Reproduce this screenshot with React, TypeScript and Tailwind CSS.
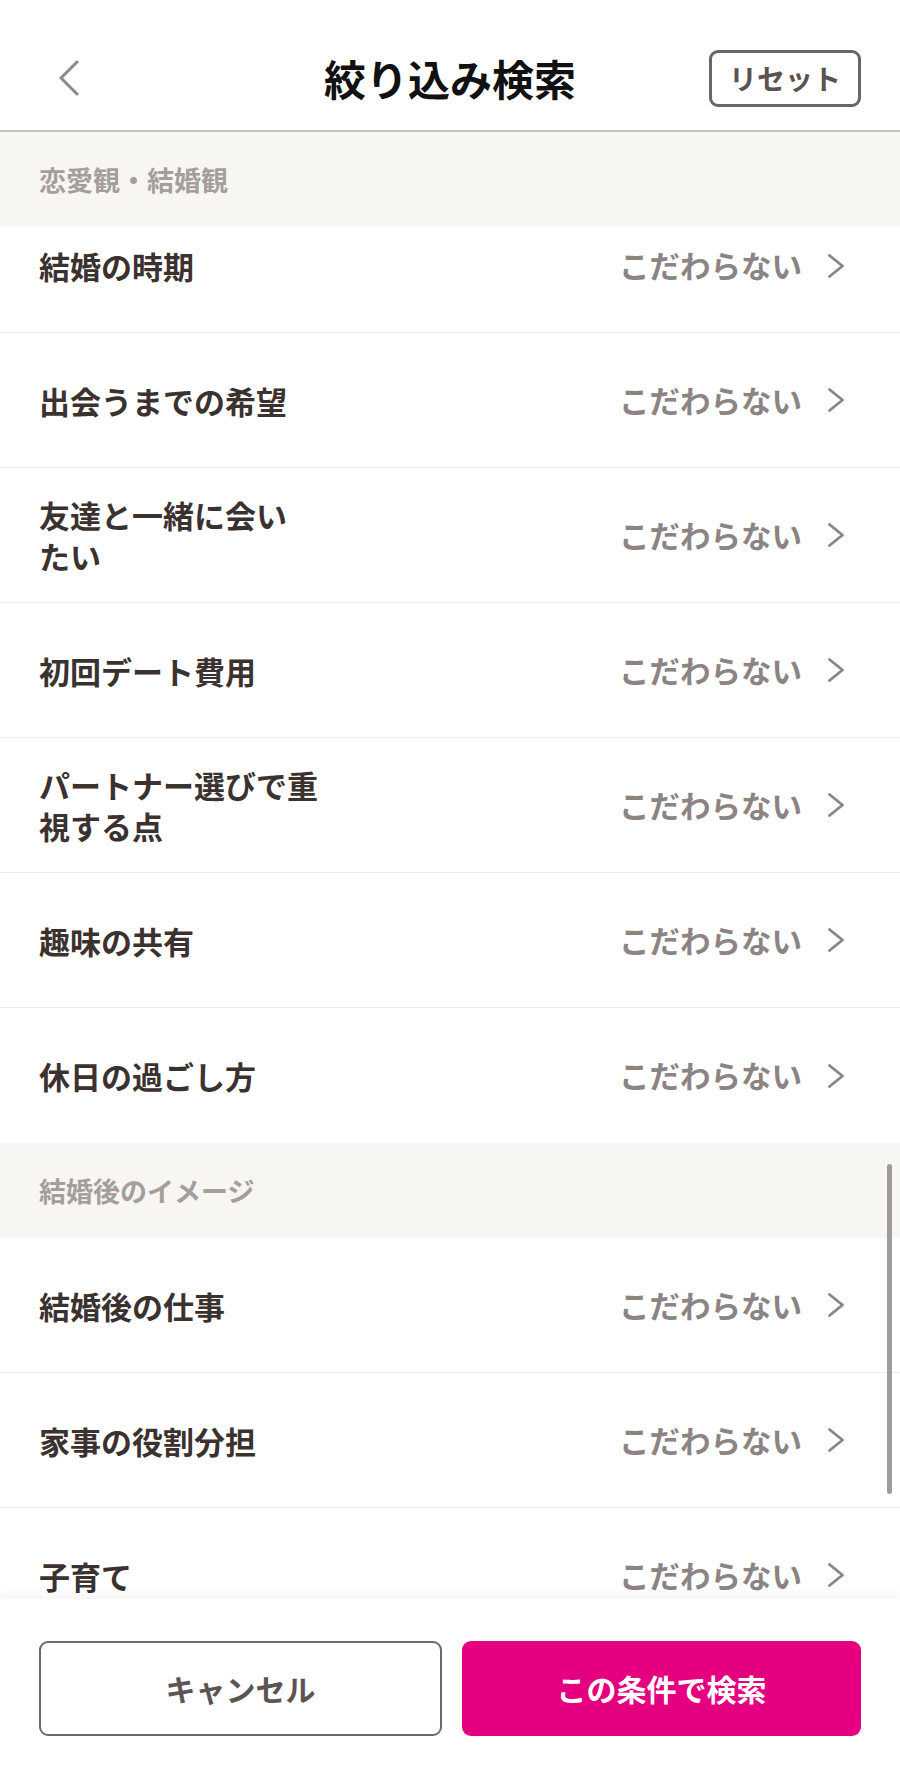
import React from 'react';

const FONT = { fontFamily: '"Noto Sans CJK JP", "Noto Sans", sans-serif' };

type Item = { label: React.ReactNode; value: string };

const LOVE_ITEMS: Item[] = [
  { label: '出会うまでの希望', value: 'こだわらない' },
  { label: <>友達と一緒に会い<br />たい</>, value: 'こだわらない' },
  { label: '初回デート費用', value: 'こだわらない' },
  { label: <>パートナー選びで重<br />視する点</>, value: 'こだわらない' },
  { label: '趣味の共有', value: 'こだわらない' },
  { label: '休日の過ごし方', value: 'こだわらない' },
];

const AFTER_ITEMS: Item[] = [
  { label: '結婚後の仕事', value: 'こだわらない' },
  { label: '家事の役割分担', value: 'こだわらない' },
  { label: '子育て', value: 'こだわらない' },
];

function Chevron() {
  return (
    <svg width="20" height="26" viewBox="0 0 20 26" className="mr-[15px]">
      <path d="M3.5 2.5 L16.5 13 L3.5 23.5" fill="none" stroke="currentColor" strokeWidth="2.8" strokeLinecap="round" strokeLinejoin="round" />
    </svg>
  );
}

function SectionHeader({ title }: { title: string }) {
  return (
    <div className="h-[95px] shrink-0 bg-[#f7f6f3] px-[39px] flex items-center">
      <span className="text-[27px] font-bold text-[#a59e9c] leading-none">{title}</span>
    </div>
  );
}

function Row({ item, first = false, last = false }: { item: Item; first?: boolean; last?: boolean }) {
  return (
    <div
      className={`shrink-0 px-[39px] flex items-center justify-between ${
        first ? 'h-[106px] pb-[28px]' : 'h-[135px]'
      } ${last ? '' : 'border-b border-[#efedec]'}`}
    >
      <div className="text-[31px] font-bold text-[#3b3230] leading-[41px]">{item.label}</div>
      <div className="flex items-center gap-[24px] text-[#8b8482]">
        <span className="text-[30.5px] font-bold leading-none">{item.value}</span>
        <Chevron />
      </div>
    </div>
  );
}

export default function App() {
  return (
    <div className="w-[900px] h-[1787px] bg-white flex flex-col overflow-hidden" style={FONT}>
      {/* Header */}
      <div className="h-[132px] shrink-0 border-b-2 border-[#c4c1c0] grid grid-cols-[1fr_auto_1fr] items-center px-[39px] pt-[26px]">
        <div className="flex items-center pl-[18px] text-[#8e8886]">
          <svg width="24" height="36" viewBox="0 0 24 36">
            <path d="M20 2 L4 18 L20 34" fill="none" stroke="currentColor" strokeWidth="3" strokeLinecap="round" strokeLinejoin="round" />
          </svg>
        </div>
        <h1 className="text-[42px] font-bold text-[#111] leading-none">絞り込み検索</h1>
        <div className="flex justify-end">
          <button className="w-[152px] h-[57px] border-[3px] border-[#6b6563] rounded-[9px] text-[28px] font-bold text-[#5a5250] leading-none">
            リセット
          </button>
        </div>
      </div>

      {/* List */}
      <div className="relative flex-1 flex flex-col overflow-hidden">
        <SectionHeader title="恋愛観・結婚観" />
        <Row item={{ label: '結婚の時期', value: 'こだわらない' }} first />
        {LOVE_ITEMS.map((item, i) => (
          <Row key={i} item={item} last={i === LOVE_ITEMS.length - 1} />
        ))}
        <SectionHeader title="結婚後のイメージ" />
        {AFTER_ITEMS.map((item, i) => (
          <Row key={i} item={item} />
        ))}
        {/* scrollbar */}
        <div className="absolute right-[8px] top-[1032px] w-[5px] h-[330px] rounded-full bg-[#a09c9b]" />
      </div>

      {/* Bottom bar */}
      <div className="h-[188px] shrink-0 bg-white shadow-[0_-6px_10px_rgba(0,0,0,0.035)] px-[39px] pt-[42px] pb-[51px] flex gap-[20px] relative">
        <button className="flex-1 h-[95px] border-2 border-[#6e6866] rounded-[9px] text-[30px] font-bold text-[#5c5452]">
          キャンセル
        </button>
        <button className="flex-1 h-[95px] rounded-[9px] bg-[#e4007f] text-[30px] font-bold text-white">
          この条件で検索
        </button>
      </div>
    </div>
  );
}
